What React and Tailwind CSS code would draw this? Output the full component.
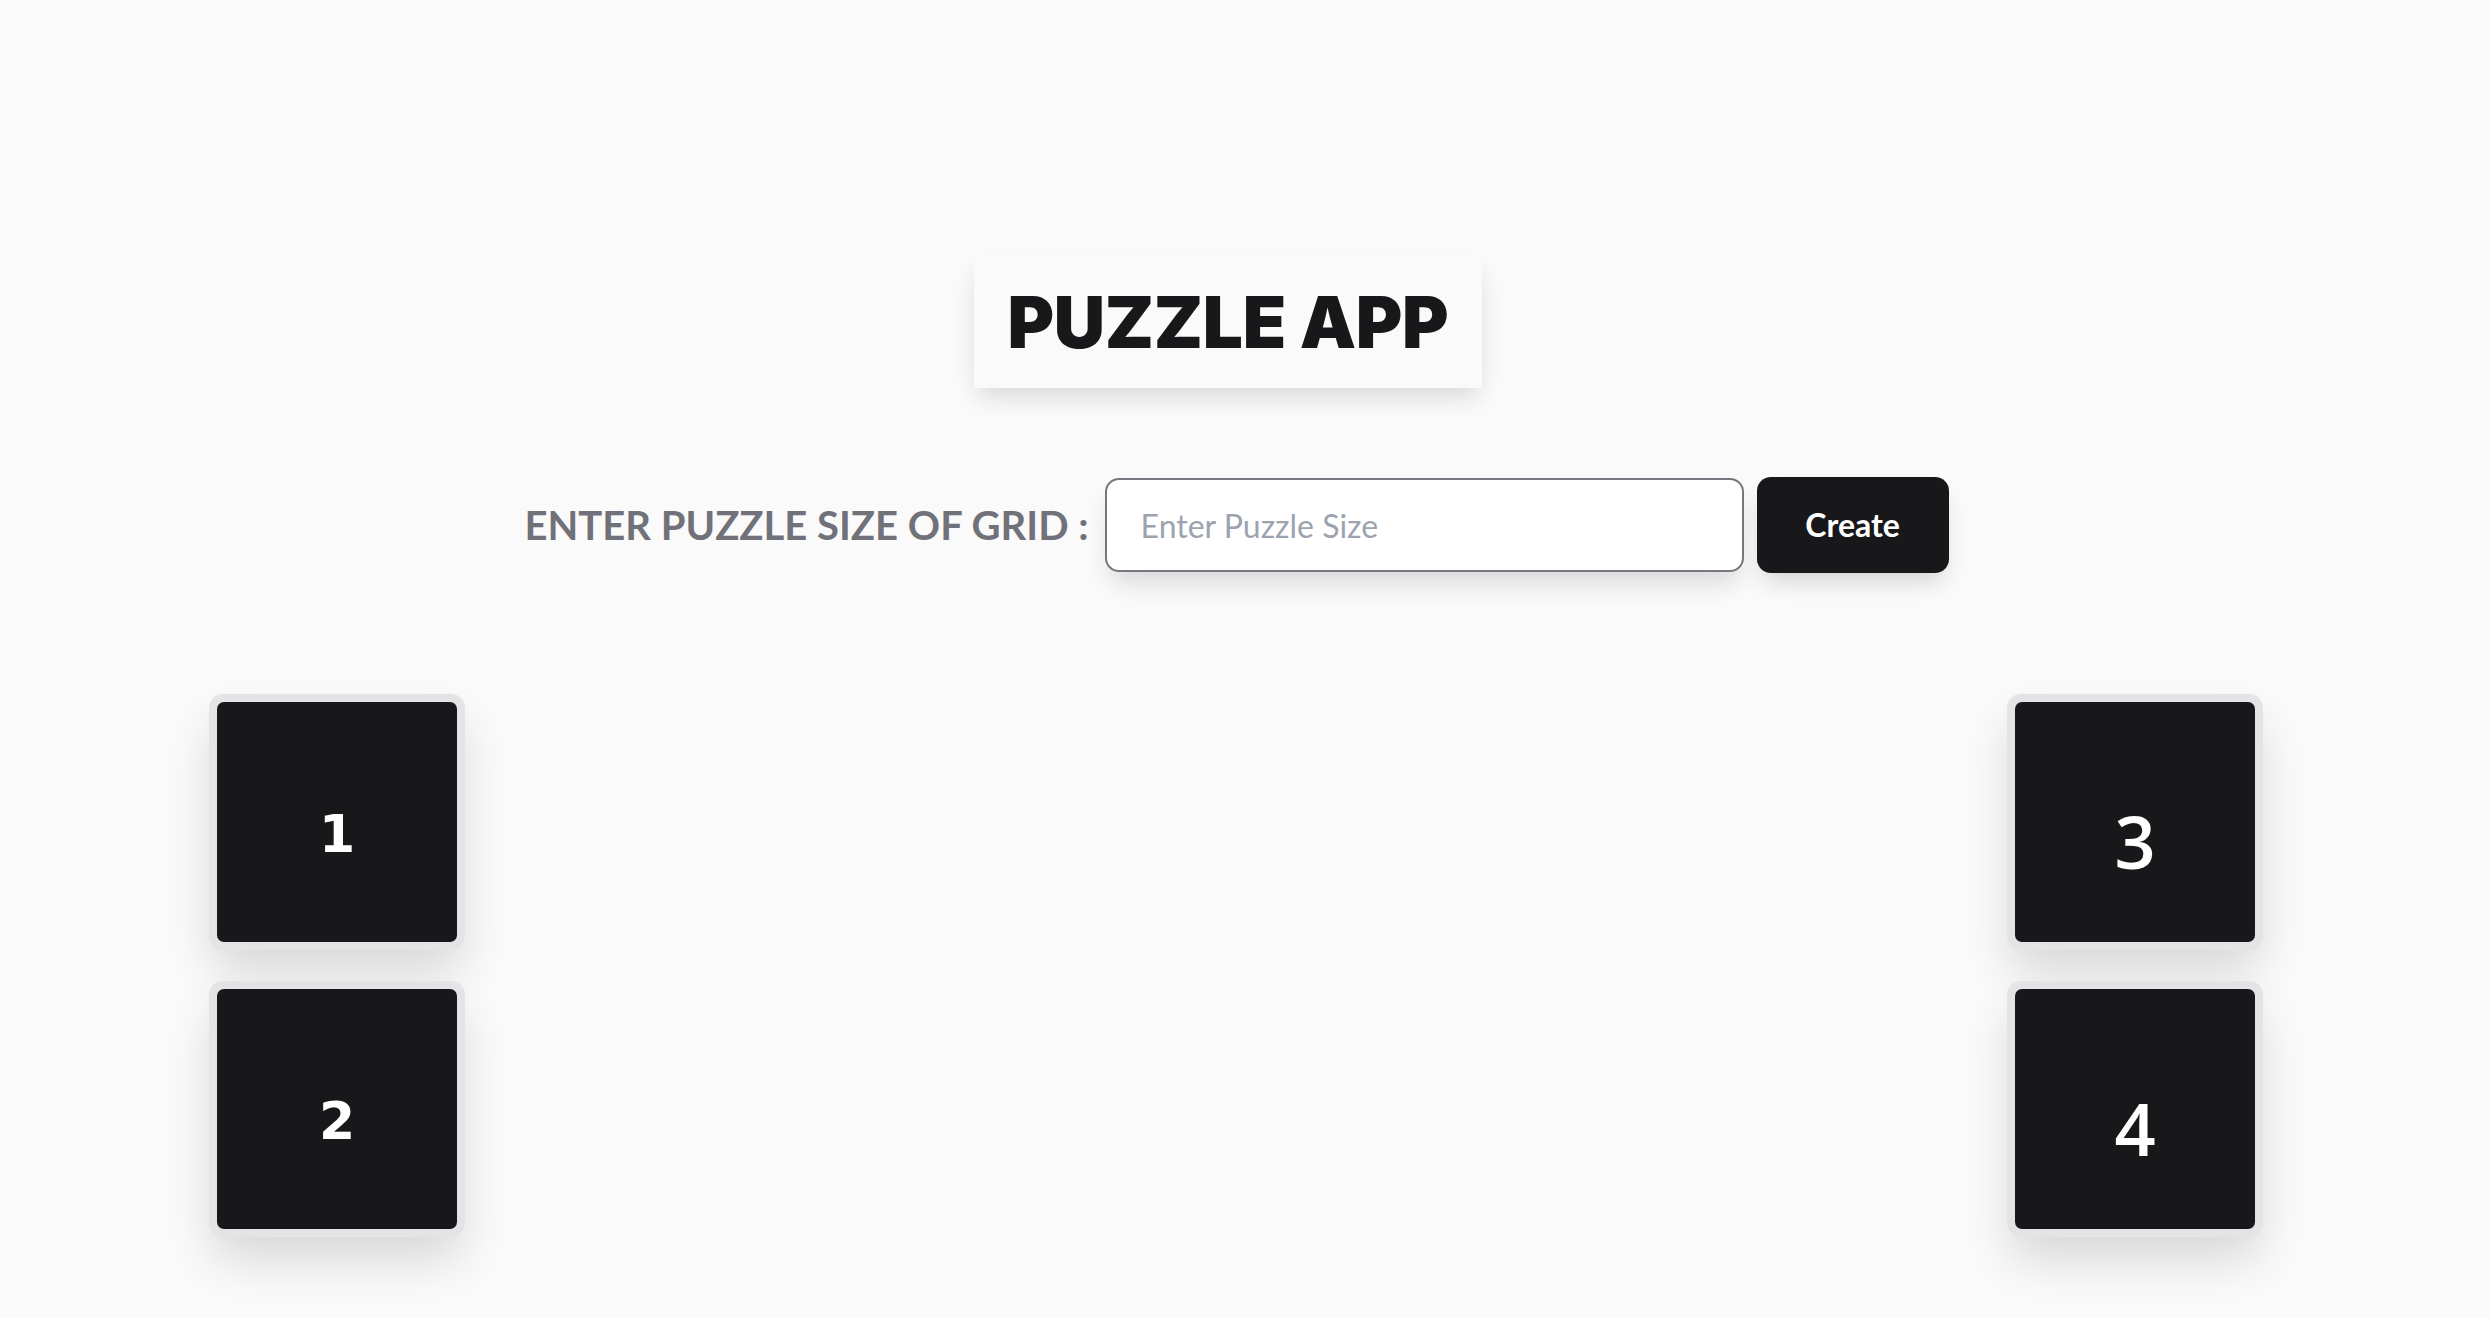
import React from "react";

function Tile({ n, variant }) {
  return (
    <div className="rounded-[14px] bg-[#e4e4e7] p-2 shadow-[0_26px_48px_-4px_rgba(0,0,0,0.14)]">
      <div
        className={
          variant === "a"
            ? "flex h-[240px] w-[240px] items-center justify-center rounded-[7px] bg-[#18181b] pt-[24px] text-[52px] font-bold leading-none text-white [font-family:'DejaVu_Sans',sans-serif]"
            : "flex h-[240px] w-[240px] items-center justify-center rounded-[7px] bg-[#18181b] pt-[38px] text-[72px] font-semibold leading-none text-white [font-family:'Open_Sans',sans-serif]"
        }
      >
        {n}
      </div>
    </div>
  );
}

export default function App() {
  return (
    <div className="min-h-screen w-full bg-[#fafafa] [font-family:Lato,'Liberation_Sans',sans-serif]">
      <div className="flex flex-col items-center pt-[257px]">
        <div className="flex w-full justify-center pr-[34px]">
          <h1 className="bg-[#fafafa] px-[34px] py-[30px] text-[71px] font-black leading-[71px] tracking-[-0.3px] text-[#18181b] shadow-[0_12px_24px_-4px_rgba(0,0,0,0.14)] [font-family:Inter,sans-serif]">
            PUZZLE APP
          </h1>
        </div>
        <div className="mt-[89px] flex w-full items-center justify-center pr-[17px]">
          <label className="mr-[16px] text-[40px] font-bold leading-none text-[#71717a]">
            ENTER PUZZLE SIZE OF GRID :
          </label>
          <input
            type="text"
            placeholder="Enter Puzzle Size"
            className="h-[94px] w-[639px] rounded-[14px] border-2 border-[#77777f] bg-white px-[34px] text-[32px] text-[#18181b] shadow-[0_16px_26px_-6px_rgba(0,0,0,0.14)] outline-none placeholder:text-[#9ca3af]"
          />
          <button className="ml-[13px] h-[96px] w-[192px] rounded-[14px] bg-[#18181b] text-[32px] font-bold text-white shadow-[0_14px_24px_-6px_rgba(0,0,0,0.16)]">
            Create
          </button>
        </div>
      </div>
      <div className="mt-[121px] flex justify-between pl-[209px] pr-[227px]">
        <div className="flex flex-col gap-[31px]">
          <Tile n="1" variant="a" />
          <Tile n="2" variant="a" />
        </div>
        <div className="flex flex-col gap-[31px]">
          <Tile n="3" variant="b" />
          <Tile n="4" variant="b" />
        </div>
      </div>
    </div>
  );
}
